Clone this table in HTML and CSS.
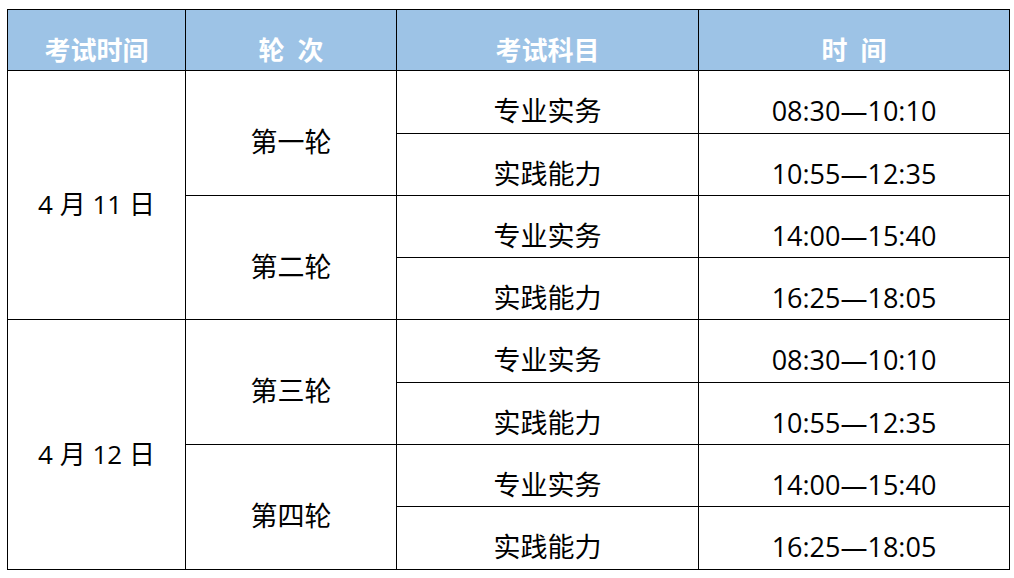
FILE: index.html
```html
<!DOCTYPE html>
<html lang="zh-CN">
<head>
<meta charset="utf-8">
<link rel="stylesheet" href="styles.css">
</head>
<body>
<table class="sched">
  <colgroup>
    <col class="c1"><col class="c2"><col class="c3"><col class="c4">
  </colgroup>
  <thead>
    <tr class="head">
      <th>考试时间</th>
      <th>轮&ensp;次</th>
      <th>考试科目</th>
      <th>时&ensp;间</th>
    </tr>
  </thead>
  <tbody>
    <tr class="r63">
      <td rowspan="4" class="date">4 月 11 日</td>
      <td rowspan="2">第一轮</td>
      <td>专业实务</td>
      <td class="num">08:30—10:10</td>
    </tr>
    <tr class="r62">
      <td>实践能力</td>
      <td class="num">10:55—12:35</td>
    </tr>
    <tr class="r62">
      <td rowspan="2">第二轮</td>
      <td>专业实务</td>
      <td class="num">14:00—15:40</td>
    </tr>
    <tr class="r62">
      <td>实践能力</td>
      <td class="num">16:25—18:05</td>
    </tr>
    <tr class="r63">
      <td rowspan="4" class="date">4 月 12 日</td>
      <td rowspan="2">第三轮</td>
      <td>专业实务</td>
      <td class="num">08:30—10:10</td>
    </tr>
    <tr class="r62">
      <td>实践能力</td>
      <td class="num">10:55—12:35</td>
    </tr>
    <tr class="r62">
      <td rowspan="2">第四轮</td>
      <td>专业实务</td>
      <td class="num">14:00—15:40</td>
    </tr>
    <tr class="r63">
      <td>实践能力</td>
      <td class="num">16:25—18:05</td>
    </tr>
  </tbody>
</table>
</body>
</html>
```

FILE: styles.css
```css
html, body {
  margin: 0;
  padding: 0;
  background: #ffffff;
}

body {
  padding: 9px 0 0 7px;
  font-family: "Open Sans", "Noto Sans CJK SC", sans-serif;
  color: #000;
}

.sched {
  border-collapse: collapse;
  table-layout: fixed;
  width: 1002px;
}

.c1 { width: 178px; }
.c2 { width: 211px; }
.c3 { width: 302px; }
.c4 { width: 311px; }

.sched th,
.sched td {
  border: 1px solid #000;
  text-align: center;
  vertical-align: middle;
  padding: 18px 0 0 0;
  font-size: 27px;
  line-height: 30px;
  font-weight: 400;
  white-space: nowrap;
}

.head {
  height: 61px;
  background: #9dc3e6;
}

.sched th {
  color: #ffffff;
  font-size: 26px;
  font-weight: 700;
  font-family: "Noto Sans CJK SC", sans-serif;
}

.r63 { height: 63px; }
.r62 { height: 62px; }

.sched td.date {
  font-size: 26px;
}

.num {
  font-size: 27px;
}
```
